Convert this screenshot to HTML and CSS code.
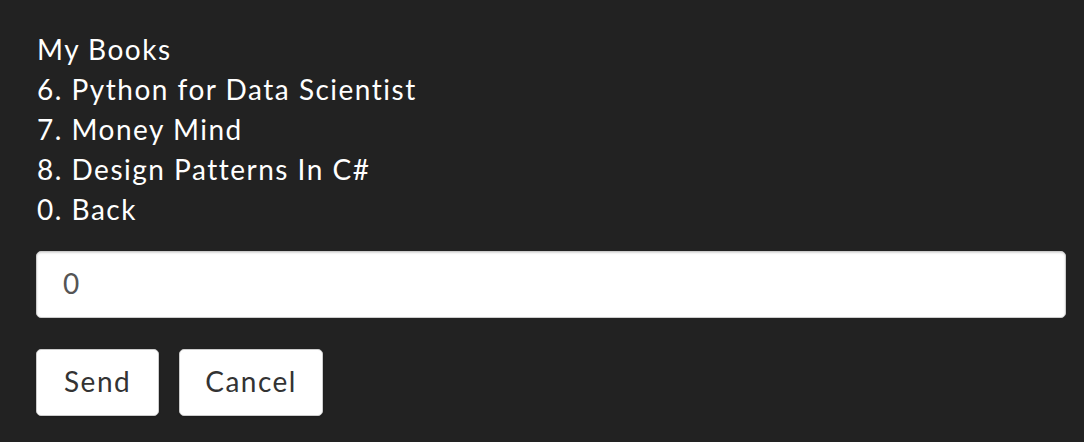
FILE: index.html
```html
<!DOCTYPE html>
<html>
<head>
<meta charset="utf-8">
<link rel="stylesheet" href="styles.css">
</head>
<body>
<div class="page">
  <div class="menu">
    <div class="line">My Books</div>
    <div class="line">6. Python for Data Scientist</div>
    <div class="line">7. Money Mind</div>
    <div class="line">8. Design Patterns In C#</div>
    <div class="line">0. Back</div>
  </div>
  <input class="field" type="text" value="0">
  <div class="actions">
    <button class="btn">Send</button>
    <button class="btn">Cancel</button>
  </div>
</div>
</body>
</html>
```
FILE: styles.css
```css
html, body {
  margin: 0;
  padding: 0;
  background: #222222;
  height: 100%;
}
.page {
  padding: 29px 18px 0 36px;
  font-family: "Lato", "Liberation Sans", sans-serif;
  display: flex;
  flex-direction: column;
}
.menu {
  color: #ffffff;
  font-size: 28px;
  letter-spacing: 1.5px;
  line-height: 40px;
  padding-left: 1px;
}
.field {
  margin-top: 22px;
  height: 67px;
  box-sizing: border-box;
  width: 100%;
  border: 1px solid #cccccc;
  border-radius: 5px;
  background: #ffffff;
  box-shadow: inset 0 1px 2px rgba(0,0,0,0.15);
  padding: 0 26px 3px;
  font-family: inherit;
  font-size: 28px;
  letter-spacing: 1.5px;
  color: #555555;
  outline: none;
}
.actions {
  margin-top: 31px;
  display: flex;
  gap: 20px;
}
.btn {
  height: 67px;
  box-sizing: border-box;
  padding: 0 27px 4px;
  background: #ffffff;
  border: 1px solid #cccccc;
  border-radius: 5px;
  box-shadow: 0 1px 2px rgba(0,0,0,0.2);
  font-family: inherit;
  font-size: 28px;
  letter-spacing: 1.5px;
  color: #333333;
}
.btn + .btn {
  padding: 0 25px 4px;
}
```
